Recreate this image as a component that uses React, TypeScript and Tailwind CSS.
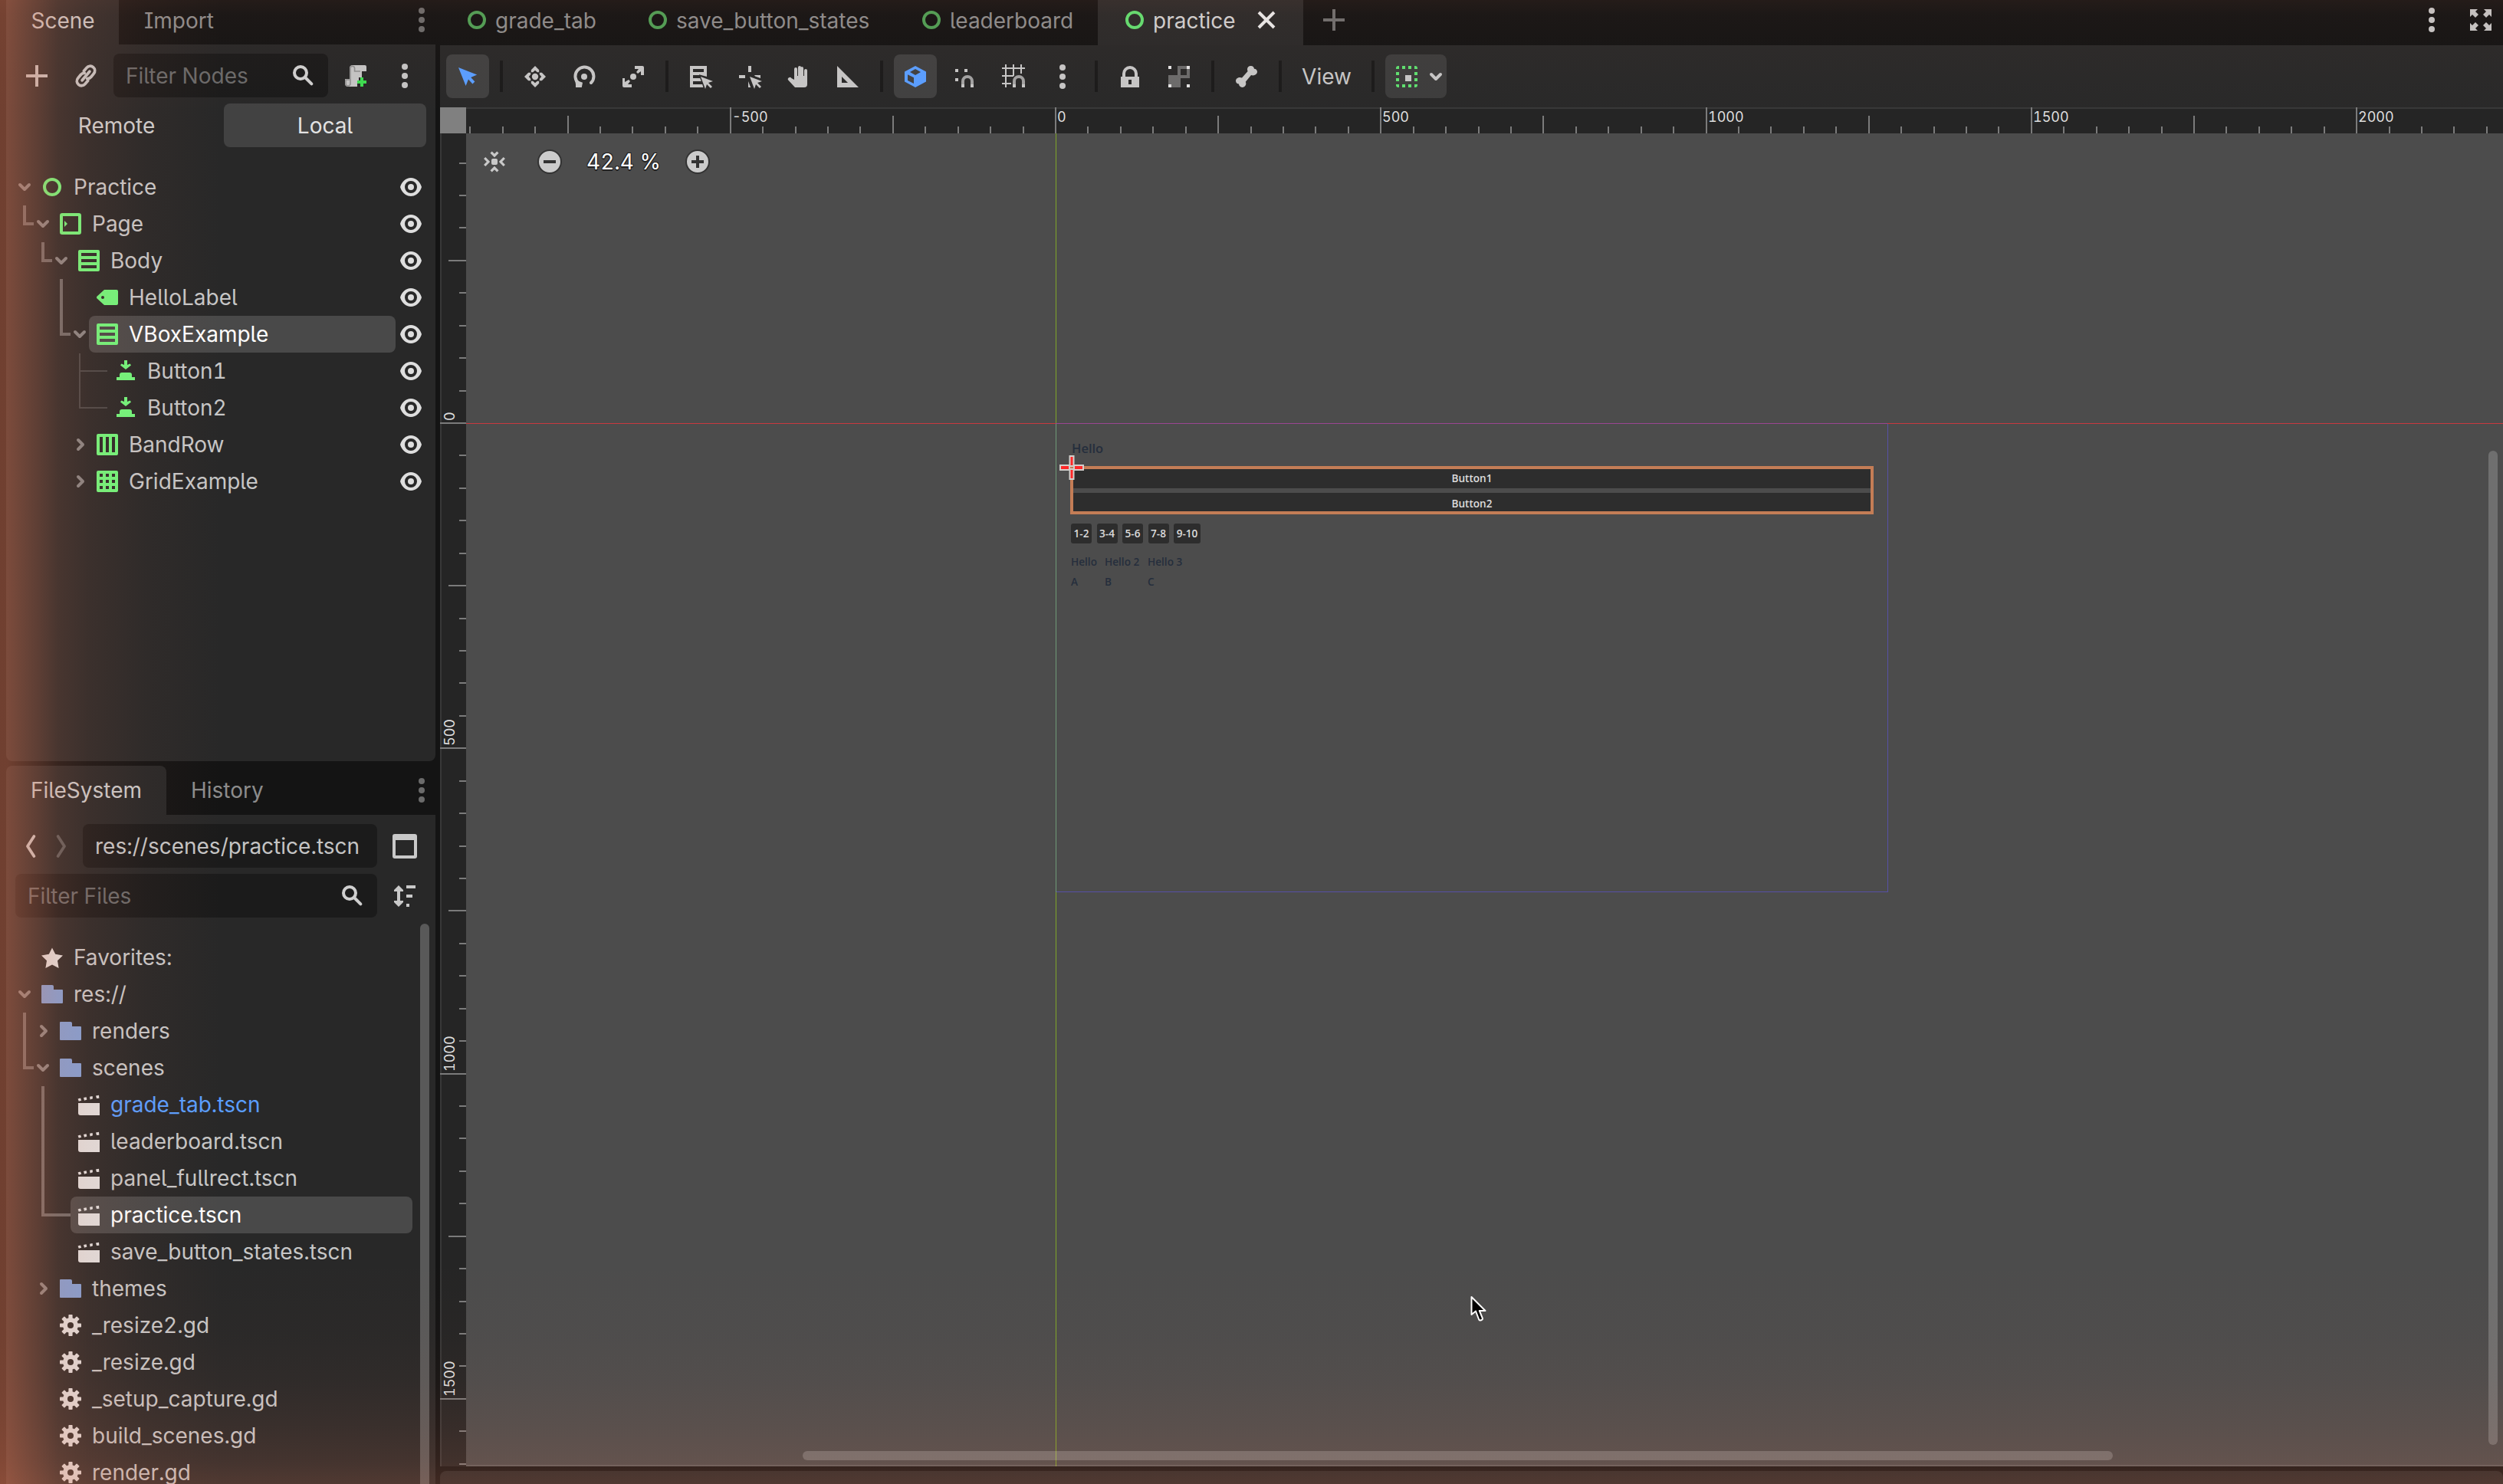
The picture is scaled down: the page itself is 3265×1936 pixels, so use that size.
import React from "react";

type IconProps = { name: string; size?: number; className?: string };

const ICONS: Record<string, React.ReactNode> = {
  control: <circle cx="8" cy="8" r="5" fill="none" stroke="currentColor" strokeWidth="2" />,
  margin: (
    <>
      <rect x="2" y="2" width="12" height="12" rx="0.6" fill="none" stroke="currentColor" strokeWidth="2" />
      <path d="M4 6l2 2-2 2z" />
    </>
  ),
  vbox: <path fillRule="evenodd" d="M2 1h12a1 1 0 0 1 1 1v12a1 1 0 0 1-1 1H2a1 1 0 0 1-1-1V2a1 1 0 0 1 1-1zM3 3v2h10V3zM3 7v2h10V7zM3 11v2h10v-2z" />,
  hbox: <path fillRule="evenodd" d="M2 1h12a1 1 0 0 1 1 1v12a1 1 0 0 1-1 1H2a1 1 0 0 1-1-1V2a1 1 0 0 1 1-1zM3 3v10h2V3zM7 3v10h2V3zM11 3v10h2V3z" />,
  gridbox: (
    <path
      fillRule="evenodd"
      d="M2 1h12a1 1 0 0 1 1 1v12a1 1 0 0 1-1 1H2a1 1 0 0 1-1-1V2a1 1 0 0 1 1-1zM3 3v2h2V3zM7 3v2h2V3zM11 3v2h2V3zM3 7v2h2V7zM7 7v2h2V7zM11 7v2h2V7zM3 11v2h2v-2zM7 11v2h2v-2zM11 11v2h2v-2z"
    />
  ),
  label: <path fillRule="evenodd" d="M6 3L1.2 7.4a.9.9 0 0 0 0 1.2L6 13h8a1 1 0 0 0 1-1V4a1 1 0 0 0-1-1zM5 7a1 1 0 1 1 0 2 1 1 0 0 1 0-2z" />,
  button: <path d="M7 1v3L5.2 3.2 4.5 4.2 8 7l3.5-2.8-.7-1L9 4V1zM5.5 9A1.5 1.5 0 0 0 4 10.500V12H2v2h12v-2h-2v-1.500A1.500 1.500 0 0 0 10.500 9z" />,
  eye: (
    <>
      <path fillRule="evenodd" d="M8 2C4.600 2 2 4.600 1 8c1 3.400 3.600 6 7 6s6-2.600 7-6c-1-3.400-3.600-6-7-6zM8 4a4 4 0 1 1 0 8 4 4 0 0 1 0-8z" />
      <circle cx="8" cy="8" r="2" />
    </>
  ),
  folder: <path d="M1 2.500A.5.5 0 0 1 1.500 2H8a1 1 0 0 1 1 1v2h5.500a.5.5 0 0 1 .5.5v8a.5.5 0 0 1-.5.5h-13a.5.5 0 0 1-.5-.5z" />,
  star: <path d="M8 1.700l2.100 4.200 4.900.8-3.500 3.400.8 4.900L8 12.700 3.700 15l.8-4.900L1 6.700l4.900-.8z" />,
  clapper: (
    <>
      <path d="M1 7h14v8H2.500A1.500 1.500 0 0 1 1 13.500z" />
      <path d="M.8 4.200l1.700-.5.6 1.700-1.700.5zM4.500 3.500l1.800-.4.400 1.600-1.700.7zM8.500 2.900l1.800-.4.200 1.600-1.700.6zM12.500 2.300l2-.4.200 2-1.700.1z" />
    </>
  ),
  gear: (
    <>
      {[0, 45, 90, 135].map((a) => (
        <rect key={a} x="6.700" y="1" width="2.600" height="14" rx="0.4" transform={`rotate(${a} 8 8)`} />
      ))}
      <circle cx="8" cy="8" r="5" />
      <circle cx="8" cy="8" r="2" fill="#2a2827" />
    </>
  ),
  search: (
    <g fill="none" stroke="currentColor" strokeWidth="2">
      <circle cx="6" cy="6" r="4" />
      <path d="M9 9l4.200 4.200" strokeLinecap="round" />
    </g>
  ),
  plus: <path d="M7 1h2v6h6v2H9v6H7V9H1V7h6z" />,
  close: <path d="M3 3l10 10M13 3L3 13" fill="none" stroke="currentColor" strokeWidth="2" />,
  link: (
    <g fill="none" stroke="currentColor" strokeWidth="1.900" strokeLinecap="round" transform="rotate(-50 8 8)">
      <path d="M6.500 11H3.600a3 3 0 0 1 0-6h2.800a3 3 0 0 1 2.400 1.200M9.500 5h2.900a3 3 0 0 1 0 6H9.600a3 3 0 0 1-2.400-1.200" />
      <path d="M4.200 8h7.600" />
    </g>
  ),
  dots: (
    <>
      <circle cx="8" cy="2" r="2" />
      <circle cx="8" cy="8" r="2" />
      <circle cx="8" cy="14" r="2" />
    </>
  ),
  script: (
    <>
      <path d="M6 1h8a1 1 0 0 1 1 1v3h-3v4h-2v3H9v3H3a2 2 0 0 1-2-2v-3h3V3a2 2 0 0 1 2-2z" />
      <path d="M6 1.600A1.500 1.500 0 0 0 4.500 3v10a1.500 1.500 0 0 1-3 0v-2.500H4M6 1.600A1.500 1.500 0 0 1 7.300 3v2H11" fill="none" stroke="#8f8f8f" strokeWidth="0.800" />
      <path d="M11 9h2v2h2v2h-2v2h-2v-2H9v-2h2z" fill="#3ddc50" />
    </>
  ),
  back: <path d="M8.200 1.500L4 8l4.200 6.500" fill="none" stroke="currentColor" strokeWidth="1.900" strokeLinejoin="round" strokeLinecap="round" />,
  forward: <path d="M3.800 1.500L8 8l-4.200 6.500" fill="none" stroke="currentColor" strokeWidth="1.900" strokeLinejoin="round" strokeLinecap="round" />,
  window: <path fillRule="evenodd" d="M1.500 0h13A1.500 1.500 0 0 1 16 1.500v13a1.500 1.500 0 0 1-1.500 1.500h-13A1.500 1.500 0 0 1 0 14.500v-13A1.500 1.500 0 0 1 1.500 0zM2 4v10h12V4z" />,
  sort: <path d="M4 1L1 4v1h2v6H1v1l3 3 3-3v-1H5V5h2V4zM9 1h6v2H9zM9 7h4v2H9zM9 13h2v2H9z" />,
  down: <path d="M5 6.500l3 3 3-3" fill="none" stroke="currentColor" strokeWidth="2" strokeLinecap="round" strokeLinejoin="round" />,
  right: <path d="M7 5l3 3-3 3" fill="none" stroke="currentColor" strokeWidth="2" strokeLinecap="round" strokeLinejoin="round" />,
  select: <path d="M2 2l4.800 12 1.700-4.200 2.700 2.900 1.500-1.500-2.600-2.700 4-1.700z" />,
  move: (
    <>
      <circle cx="8" cy="8" r="2.100" />
      <path d="M8 1L5.400 3.600v1.500h1.200L8 3.900l1.400 1.200h1.200V3.600zM8 15l-2.600-2.600v-1.500h1.200L8 12.100l1.400-1.200h1.200v1.500zM1 8l2.600-2.600h1.500v1.200L3.900 8l1.200 1.400v1.200H3.600zM15 8l-2.600-2.600h-1.500v1.200L12.100 8l-1.200 1.400v1.200h1.500z" />
    </>
  ),
  rotate: (
    <>
      <circle cx="8" cy="8" r="2" />
      <path d="M4.500 12.500A6 6 0 1 1 12.500 12" fill="none" stroke="currentColor" strokeWidth="2" strokeLinecap="round" />
      <path d="M2 10l5 1.900-.6 3.100H2.500v-2z" />
    </>
  ),
  scale: (
    <>
      <circle cx="8" cy="8" r="2" />
      <path d="M9 1h5a1 1 0 0 1 1 1v5h-2V4.500L11 6 10 5l1.500-2H9zM1 9h1.500v2.500L5 10l1 1-1.500 2H7v2H2a1 1 0 0 1-1-1z" />
    </>
  ),
  listSelect: (
    <>
      <path fillRule="evenodd" d="M1 1h11v7L7 6.600V7H3v2h4.600l.8 2H3v2h6.100l.6 2H1zM3 3v2h7V3z" />
      <path d="M8 8l8 3-3 1 2.500 2.500-1 1L12 13l-1 3z" />
    </>
  ),
  pivot: (
    <>
      <path d="M7 1h2v4H7zM1 7h4v2H1zM11 7h4v2l-3.500-1.300zM7 11l1.600 4H7z" />
      <path d="M8 8l8 3-3 1 2.500 2.500-1 1L12 13l-1 3z" />
    </>
  ),
  hand: (
    <path d="M8.500 1a1 1 0 0 0-1 1v5.500h-.5V3a1 1 0 0 0-2 0v7L3.200 9A1.200 1.200 0 0 0 1.100 10.300L5.500 15H11.500a2 2 0 0 0 2-2V4a1 1 0 0 0-2 0v3.500H11V2.500a1 1 0 0 0-1-1 .8.8 0 0 0-.5.3V2a1 1 0 0 0-1-1z" />
  ),
  triangle: <path fillRule="evenodd" d="M1 1l14 14H1zM4 8v4h4z" />,
  cube: <path fillRule="evenodd" d="M8 1l7 3.700v6.600L8 15l-7-3.700V4.700zM8 3L4.500 5 8 7l3.500-2zM3 6.600v3.900l4 2V8.600z" />,
  magnet: (
    <>
      <path d="M2 3h2v2H2zM8 3h2v2H8zM2 9h2v2H2z" />
      <path d="M7 13v-2a3 3 0 0 1 6 0v2" fill="none" stroke="#a2a2a2" strokeWidth="2" />
      <path d="M6 13h2v2H6zM12 13h2v2h-2z" />
    </>
  ),
  gridMagnet: (
    <>
      <path d="M3 0v15M8 0v7.500M13 0v6M.5 2.500h15M.5 7.500H8M.5 12.500h6" fill="none" stroke="currentColor" strokeWidth="1" />
      <path d="M8.500 13v-2a3 3 0 0 1 6 0v2" fill="none" stroke="#a2a2a2" strokeWidth="2" />
      <path d="M7.500 13h2v2h-2zM13.500 13h2v2h-2z" />
    </>
  ),
  lock: (
    <>
      <path fillRule="evenodd" d="M2 8h12v7H2zM7 10v3h2v-3z" />
      <path d="M4 8V6a4 4 0 0 1 8 0v2" fill="none" stroke="currentColor" strokeWidth="2" />
    </>
  ),
  group: (
    <>
      <path fillRule="evenodd" fill="#6b6b6b" d="M7 1h6v2h2v6H9v6H3v-2H1V7h6zM9 3v4h4V3z" />
      <path fill="#e4e4e4" d="M1 1h2v2H1zM13 1h2v2h-2zM1 13h2v2H1zM13 13h2v2h-2z" />
    </>
  ),
  bone: (
    <path d="M10.700 1a2.200 2.200 0 0 0-2.200 2.300c0 .5.100.9.300 1.200L5 8.800C3.500 8 1 8.800 1 10.800 1 12 2 12.800 3 12.800 3 14 4 15 5.200 15c1.900 0 3-2 2.200-3.600L11 7c1.800.7 4-.3 4-2.200A2.200 2.200 0 0 0 13 2.900 2.200 2.200 0 0 0 10.700 1z" />
  ),
  guides: (
    <>
      <path
        fill="#5fe070"
        d="M2.500 1H3v2H1v-.5A1.500 1.500 0 0 1 2.500 1zM5 1h2v2H5zM9 1h2v2H9zM13 1h.5A1.500 1.500 0 0 1 15 2.500V3h-2zM1 5h2v2H1zM1 9h2v2H1zM1 13h2v2h-.5A1.500 1.500 0 0 1 1 13.500zM5 13h2v2H5zM9 13h2v2H9zM13 13h2v.5a1.500 1.500 0 0 1-1.500 1.500H13zM13 5h2v2h-2zM13 9h2v2h-2z"
      />
      <path d="M7 7h4v4H7z" />
    </>
  ),
  expand: (
    <path d="M1 1h5L4.500 2.500l2 2-2 2-2-2L1 6zM15 1v5l-1.500-1.500-2 2-2-2 2-2L10 1zM1 15v-5l1.500 1.500 2-2 2 2-2 2L6 15zM15 15h-5l1.500-1.500-2-2 2-2 2 2L15 10z" />
  ),
  center: (
    <>
      <rect x="6" y="6" width="4" height="4" rx="1" />
      <path d="M5.800 1.800L8 4l2.200-2.200M5.800 14.200L8 12l2.200 2.200M1.600 5.500L4 8l-2.400 2.500M14.400 5.500L12 8l2.400 2.500" fill="none" stroke="currentColor" strokeWidth="1.600" />
    </>
  ),
};

function Icon({ name, size = 32, className = "" }: IconProps) {
  return (
    <svg viewBox="0 0 16 16" width={size} height={size} fill="currentColor" className={`shrink-0 overflow-visible ${className}`}>
      {ICONS[name]}
    </svg>
  );
}

type TreeItem = { level: number; icon: string; text: string; arrow?: "down" | "right"; selected?: boolean; tone?: string };

const SCENE: TreeItem[] = [
  { level: 0, icon: "control", text: "Practice", arrow: "down" },
  { level: 1, icon: "margin", text: "Page", arrow: "down" },
  { level: 2, icon: "vbox", text: "Body", arrow: "down" },
  { level: 3, icon: "label", text: "HelloLabel" },
  { level: 3, icon: "vbox", text: "VBoxExample", arrow: "down", selected: true },
  { level: 4, icon: "button", text: "Button1" },
  { level: 4, icon: "button", text: "Button2" },
  { level: 3, icon: "hbox", text: "BandRow", arrow: "right" },
  { level: 3, icon: "gridbox", text: "GridExample", arrow: "right" },
];

const FILES: TreeItem[] = [
  { level: 0, icon: "star", text: "Favorites:" },
  { level: 0, icon: "folder", text: "res://", arrow: "down" },
  { level: 1, icon: "folder", text: "renders", arrow: "right" },
  { level: 1, icon: "folder", text: "scenes", arrow: "down" },
  { level: 2, icon: "clapper", text: "grade_tab.tscn", tone: "text-[#5a9eff]" },
  { level: 2, icon: "clapper", text: "leaderboard.tscn" },
  { level: 2, icon: "clapper", text: "panel_fullrect.tscn" },
  { level: 2, icon: "clapper", text: "practice.tscn", selected: true },
  { level: 2, icon: "clapper", text: "save_button_states.tscn" },
  { level: 1, icon: "folder", text: "themes", arrow: "right" },
  { level: 1, icon: "gear", text: "_resize2.gd" },
  { level: 1, icon: "gear", text: "_resize.gd" },
  { level: 1, icon: "gear", text: "_setup_capture.gd" },
  { level: 1, icon: "gear", text: "build_scenes.gd" },
  { level: 1, icon: "gear", text: "render.gd" },
];

function TreeRow({ item, iconTone, children }: { item: TreeItem; iconTone: string; children?: React.ReactNode }) {
  return (
    <div className="flex h-12 shrink-0 items-center" style={{ paddingLeft: 8 + item.level * 24 }}>
      <div className="flex h-8 w-7 shrink-0 text-[#858585]">{item.arrow && <Icon name={item.arrow} />}</div>
      <div className={`flex h-12 min-w-0 flex-1 items-center gap-3 rounded-lg pl-2 ${item.selected ? "bg-[#494949]" : ""}`}>
        <Icon name={item.icon} className={iconTone} />
        <span className={`whitespace-nowrap ${item.selected ? "text-white" : item.tone ?? "text-[#c6c6c6]"}`}>{item.text}</span>
      </div>
      {children}
    </div>
  );
}

function Field({ text, tone, search, className }: { text: string; tone: string; search?: boolean; className: string }) {
  return (
    <div className={`flex h-[57px] items-center justify-between rounded-lg bg-[#1b1b1b] pl-4 pr-4 ${className}`}>
      <span className={`whitespace-nowrap ${tone}`}>{text}</span>
      {search && <Icon name="search" className="text-[#cfcfcf]" />}
    </div>
  );
}

function ScenePanel() {
  return (
    <section className="flex h-[993px] shrink-0 flex-col">
      <div className="flex h-[58px] items-start">
        <div className="flex h-[58px] w-[147px] justify-center bg-[#282828] pb-[5px] text-[#c9c9c9]">
          <span className="flex items-center pl-[1px]">Scene</span>
        </div>
        <div className="flex h-[52px] flex-1 items-center justify-between pl-[33px] pr-[2px] text-[#8c8c8c]">
          <span className="pt-px">Import</span>
          <Icon name="dots" className="text-[#6b6b6b]" />
        </div>
      </div>
      <div className="flex flex-1 flex-col rounded-b-lg bg-[#282828] pt-3">
        <div className="flex h-[57px] items-center text-[#c4c4c4]">
          <Icon name="plus" className="ml-6" />
          <Icon name="link" className="ml-8" />
          <Field text="Filter Nodes" tone="text-[#6a6a6a]" search className="ml-5 w-[280px]" />
          <Icon name="script" className="ml-5" />
          <Icon name="dots" className="ml-8" />
        </div>
        <div className="mt-2 flex h-[57px] gap-2 pl-3 pr-3 text-[#cdcdcd]">
          <div className="flex w-[264px] items-center justify-center">Remote</div>
          <div className="flex w-[264px] items-center justify-center rounded-lg bg-[#424242] text-[#e2e2e2]">Local</div>
        </div>
        <div className="relative mt-7 flex flex-col">
          <svg width="200" height="432" className="absolute left-0 top-0" fill="none" stroke="#6a6a6a" strokeWidth="4">
            <path d="M24 48v24h12M48 96v24h12M72 144v72h12" />
            <path d="M96 241v71h36M96 264h36" stroke="#484848" strokeWidth="2" />
          </svg>
          {SCENE.map((item) => (
            <TreeRow key={item.text} item={item} iconTone="text-[#6ff77c]">
              <Icon name="eye" className="ml-1 mr-4 text-[#dedede]" />
            </TreeRow>
          ))}
        </div>
      </div>
    </section>
  );
}

function FilePanel() {
  return (
    <section className="mt-1.5 flex h-[937px] shrink-0 flex-col overflow-hidden">
      <div className="flex h-16 shrink-0">
        <div className="flex w-[209px] items-center justify-center rounded-t-lg bg-[#282828] text-[#c9c9c9]">FileSystem</div>
        <div className="flex flex-1 items-center justify-between pl-8 pr-[2px] text-[#8c8c8c]">
          <span>History</span>
          <Icon name="dots" className="text-[#6b6b6b]" />
        </div>
      </div>
      <div className="flex flex-1 flex-col bg-[#282828] pt-3">
        <div className="flex h-[57px] shrink-0 items-center text-[#c9c9c9]">
          <Icon name="back" className="ml-5" />
          <Icon name="forward" className="ml-2 text-[#5c5c5c]" />
          <Field text="res://scenes/practice.tscn" tone="text-[#c4c4c4]" className="ml-2 w-[384px]" />
          <Icon name="window" className="ml-5" />
        </div>
        <div className="mt-2 flex h-[57px] shrink-0 items-center text-[#c9c9c9]">
          <Field text="Filter Files" tone="text-[#6a6a6a]" search className="ml-3 w-[472px]" />
          <Icon name="sort" className="ml-5" />
        </div>
        <div className="mt-2 flex flex-1 justify-between">
          <div className="relative mt-5 flex w-[530px] flex-col">
            <svg width="200" height="700" className="absolute left-0 top-0" fill="none" stroke="#6a6a6a" strokeWidth="4">
              <path d="M24 96v72h12M48 192v168h36" />
            </svg>
            {FILES.map((item) => (
              <TreeRow key={item.text} item={item} iconTone={item.icon === "folder" ? "text-[#80a0d6]" : "text-[#e0e0e0]"} />
            ))}
          </div>
          <div className="mr-2 h-[760px] w-3 rounded-full bg-[#595959]" />
        </div>
      </div>
    </section>
  );
}

const TABS = [
  { text: "grade_tab", cls: "w-[236px] text-[#8c8c8c]", dot: "text-[#4f9e55]" },
  { text: "save_button_states", cls: "w-[357px] text-[#8c8c8c]", dot: "text-[#4f9e55]" },
  { text: "leaderboard", cls: "w-[265px] text-[#8c8c8c]", dot: "text-[#4f9e55]" },
  { text: "practice", cls: "w-[268px] bg-[#2a2a2a] text-[#cfcfcf]", dot: "text-[#62dd70]", close: true },
];

const TOOLS = [
  "select*", "|", "move", "rotate", "scale", "|", "listSelect", "pivot", "hand", "triangle", "|",
  "cube*", "magnet", "gridMagnet", "dots", "|", "lock", "group", "|", "bone", "|",
];

const Separator = () => <div className="mx-1.5 h-[41px] w-1 shrink-0 bg-[#1b1b1b]" />;

function Toolbar() {
  return (
    <div className="flex h-[81px] shrink-0 items-center gap-2 bg-[#292929] pl-2 text-[#c6c6c6]">
      {TOOLS.map((tool, i) =>
        tool === "|" ? (
          <Separator key={i} />
        ) : (
          <div
            key={i}
            className={`flex h-[57px] w-14 shrink-0 items-center justify-center rounded-lg ${tool.endsWith("*") ? "bg-[#414141] text-[#5a9eff]" : ""}`}
          >
            <Icon name={tool.replace("*", "")} />
          </div>
        ),
      )}
      <div className="flex w-[89px] shrink-0 items-center justify-center">View</div>
      <Separator />
      <div className="flex h-[57px] w-20 shrink-0 items-center rounded-lg bg-[#3d3d3d] pl-3">
        <Icon name="guides" />
        <Icon name="down" className="ml-[6px]" />
      </div>
    </div>
  );
}

const STEP = 42.43;

function TopRuler() {
  const ticks = Array.from({ length: 63 }, (_, k) => k - 18);
  return (
    <svg width="2657" height="34" className="shrink-0 bg-[#252525]" fill="#dedede">
      <rect width="2657" height="2" fill="#383838" />
      {ticks.map((i) => {
        const x = Math.round(768 + i * STEP);
        const h = i % 10 === 0 ? 34 : i % 5 === 0 ? 23 : 9;
        return <rect key={i} x={x} y={34 - h} width="2" height={h} fill="#7b7b7b" />;
      })}
      {[-500, 0, 500, 1000, 1500, 2000].map((v) => (
        <text key={v} x={Math.round(768 + (v / 50) * STEP) + 3} y="19" fontSize="18">
          {v}
        </text>
      ))}
    </svg>
  );
}

function SideRuler() {
  const ticks = Array.from({ length: 41 }, (_, k) => k - 8);
  return (
    <svg width="34" height="1739" className="shrink-0 bg-[#252525]" fill="#dedede">
      <rect width="2" height="1739" fill="#383838" />
      {ticks.map((i) => {
        const y = Math.round(377 + i * STEP);
        const w = i % 10 === 0 ? 34 : i % 5 === 0 ? 23 : 9;
        return <rect key={i} x={34 - w} y={y} width={w} height="2" fill="#7b7b7b" />;
      })}
      {[0, 500, 1000, 1500].map((v) => (
        <text key={v} transform={`translate(19 ${Math.round(377 + (v / 50) * STEP) - 2}) rotate(-90)`} fontSize="18">
          {v}
        </text>
      ))}
    </svg>
  );
}

const CHIPS = [
  { text: "1-2", cls: "w-[27px]" },
  { text: "3-4", cls: "w-[27px]" },
  { text: "5-6", cls: "w-[27px]" },
  { text: "7-8", cls: "w-[27px]" },
  { text: "9-10", cls: "w-[35px]" },
];

function Canvas() {
  return (
    <div className="relative h-[1739px] w-[2657px] overflow-hidden bg-[#4c4c4c]">
      {/* axes and viewport frame */}
      <svg width="2657" height="1739" className="absolute left-0 top-0" shapeRendering="crispEdges">
        <rect x="0" y="378" width="2657" height="1" fill="#c8383f" />
        <rect x="769" y="0" width="1" height="378" fill="#7fa628" />
        <rect x="769" y="379" width="1" height="611" fill="#6f9a78" />
        <rect x="769" y="990" width="1" height="749" fill="#7fa628" />
        <rect x="769" y="378" width="1085" height="1" fill="#9a4592" />
        <rect x="1854" y="379" width="1" height="611" fill="#5750a6" />
        <rect x="770" y="989" width="1085" height="1" fill="#5750a6" />
      </svg>

      {/* edited scene */}
      <div className="absolute left-[790px] top-[401px] flex w-[1044px] flex-col font-['Open_Sans','Noto_Sans',sans-serif] text-[13.6px] font-semibold leading-none text-[#dcdcdc]">
        <span className="h-[35px] pt-[1px] text-[16.5px] font-semibold leading-[18px] text-[#252e3c]">Hello</span>
        <div className="flex h-[27px] items-center justify-center rounded-[3px] bg-[#2d2d2d]">Button1</div>
        <div className="mt-1.5 flex h-[27px] items-center justify-center rounded-[3px] bg-[#2d2d2d]">Button2</div>
        <div className="-ml-px mt-[13px] flex gap-[6.5px]">
          {CHIPS.map((c) => (
            <div key={c.text} className={`flex h-[26px] shrink-0 items-center justify-center rounded-[3px] bg-[#2d2d2d] ${c.cls}`}>
              {c.text}
            </div>
          ))}
        </div>
        <div className="-ml-px mt-[17px] grid grid-cols-[44px_56px_60px] gap-y-[12px] whitespace-nowrap text-[#252e3c]">
          {["Hello", "Hello 2", "Hello 3", "A", "B", "C"].map((t) => (
            <span key={t}>{t}</span>
          ))}
        </div>
      </div>

      {/* selection outline and pivot */}
      <div className="absolute left-[788px] top-[434px] h-[63px] w-[1048px] border-4 border-[#c47d56]" />
      <svg width="32" height="32" className="absolute left-[774px] top-[420px]">
        <g fill="#ff2828" stroke="#d2cecb" strokeWidth="2">
          <rect x="13.500" y="1" width="5" height="13" />
          <rect x="13.500" y="18" width="5" height="13" />
          <rect x="1" y="13" width="12" height="6" />
          <rect x="19" y="13" width="12" height="6" />
        </g>
      </svg>

      {/* zoom controls */}
      <div className="absolute left-[21px] top-[13px] flex h-12 items-center text-[#c9c9c9]">
        <Icon name="center" />
        <svg width="32" height="32" className="ml-10">
          <circle cx="16" cy="16" r="15" fill="#cbcbcb" stroke="#333" strokeWidth="2" />
          <rect x="8" y="14" width="16" height="4" fill="#333" />
        </svg>
        <span className="w-[161px] text-center text-white [text-shadow:-1px_-1px_0_#222,1px_-1px_0_#222,-1px_1px_0_#222,1px_1px_0_#222,0_2px_0_#222]">42.4 %</span>
        <svg width="32" height="32">
          <circle cx="16" cy="16" r="15" fill="#cbcbcb" stroke="#333" strokeWidth="2" />
          <path d="M14 8h4v6h6v4h-6v6h-4v-6H8v-4h6z" fill="#333" />
        </svg>
      </div>

      {/* scrollbars */}
      <div className="absolute left-[439px] top-[1719px] h-3 w-[1709px] rounded-full bg-white/20" />
      <div className="absolute left-[2638px] top-[414px] h-[1297px] w-3 rounded-full bg-white/20" />
      <div className="absolute bottom-0 left-0 h-0.5 w-full bg-white/10" />

      {/* mouse pointer */}
      <svg width="24" height="38" className="absolute left-[1309px] top-[1515px]">
        <path d="M2.500 3v23l5.500-4.500 4.200 11c1 2 5.300.6 4.600-1.800l-4-9.700h7.700z" fill="#000" stroke="#fff" strokeWidth="2" strokeLinejoin="round" />
      </svg>
    </div>
  );
}

export default function App() {
  return (
    <div className="relative flex h-[1936px] w-[3265px] overflow-hidden bg-[#141414] font-['Inter',sans-serif] text-[28px] leading-none [font-feature-settings:'ss04','cv05','cv08','tnum']">
      <aside className="ml-2 flex w-[560px] shrink-0 flex-col">
        <ScenePanel />
        <FilePanel />
      </aside>

      <main className="ml-1.5 flex w-[2691px] shrink-0 flex-col">
        <div className="flex h-[59px] shrink-0">
          {TABS.map((t) => (
            <div key={t.text} className={`flex h-[59px] shrink-0 items-center pb-[7px] pl-8 ${t.cls}`}>
              <Icon name="control" className={t.dot} />
              <span className="ml-2 whitespace-nowrap pt-0.5">{t.text}</span>
              {t.close && <Icon name="close" className="ml-auto mr-8 text-[#e8e8e8]" />}
            </div>
          ))}
          <div className="flex h-[52px] flex-1 items-center pl-6 pr-[13px]">
            <Icon name="plus" className="text-[#6e6e6e]" />
            <Icon name="dots" className="ml-auto text-[#c4c4c4]" />
            <Icon name="expand" className="ml-8 text-[#c4c4c4]" />
          </div>
        </div>
        <Toolbar />
        <div className="flex h-[34px] shrink-0">
          <div className="h-[34px] w-[34px] shrink-0 bg-[#808080]" />
          <TopRuler />
        </div>
        <div className="flex h-[1739px] shrink-0">
          <SideRuler />
          <Canvas />
        </div>
        <div className="mt-1.5 h-[17px] shrink-0 rounded-t-lg bg-[#282828]" />
      </main>

      {/* warm glow along the window edges */}
      <div className="pointer-events-none absolute inset-0 bg-[linear-gradient(to_right,rgb(230_120_85/0.44)_0px,rgb(230_120_85/0.44)_10px,rgb(230_120_85/0.28)_50px,rgb(230_120_85/0.17)_76px,rgb(230_120_85/0.1)_115px,rgb(230_120_85/0.04)_190px,rgb(230_120_85/0)_290px)]" />
      <div className="pointer-events-none absolute inset-0 bg-[linear-gradient(to_bottom,rgb(230_120_85/0.08)_0px,rgb(230_120_85/0.04)_20px,rgb(230_120_85/0.02)_70px,rgb(230_120_85/0)_150px,rgb(230_120_85/0)_1640px,rgb(230_120_85/0.015)_1740px,rgb(230_120_85/0.04)_1800px,rgb(230_120_85/0.09)_1860px,rgb(230_120_85/0.145)_1905px,rgb(230_120_85/0.21)_1936px)]" />
    </div>
  );
}
